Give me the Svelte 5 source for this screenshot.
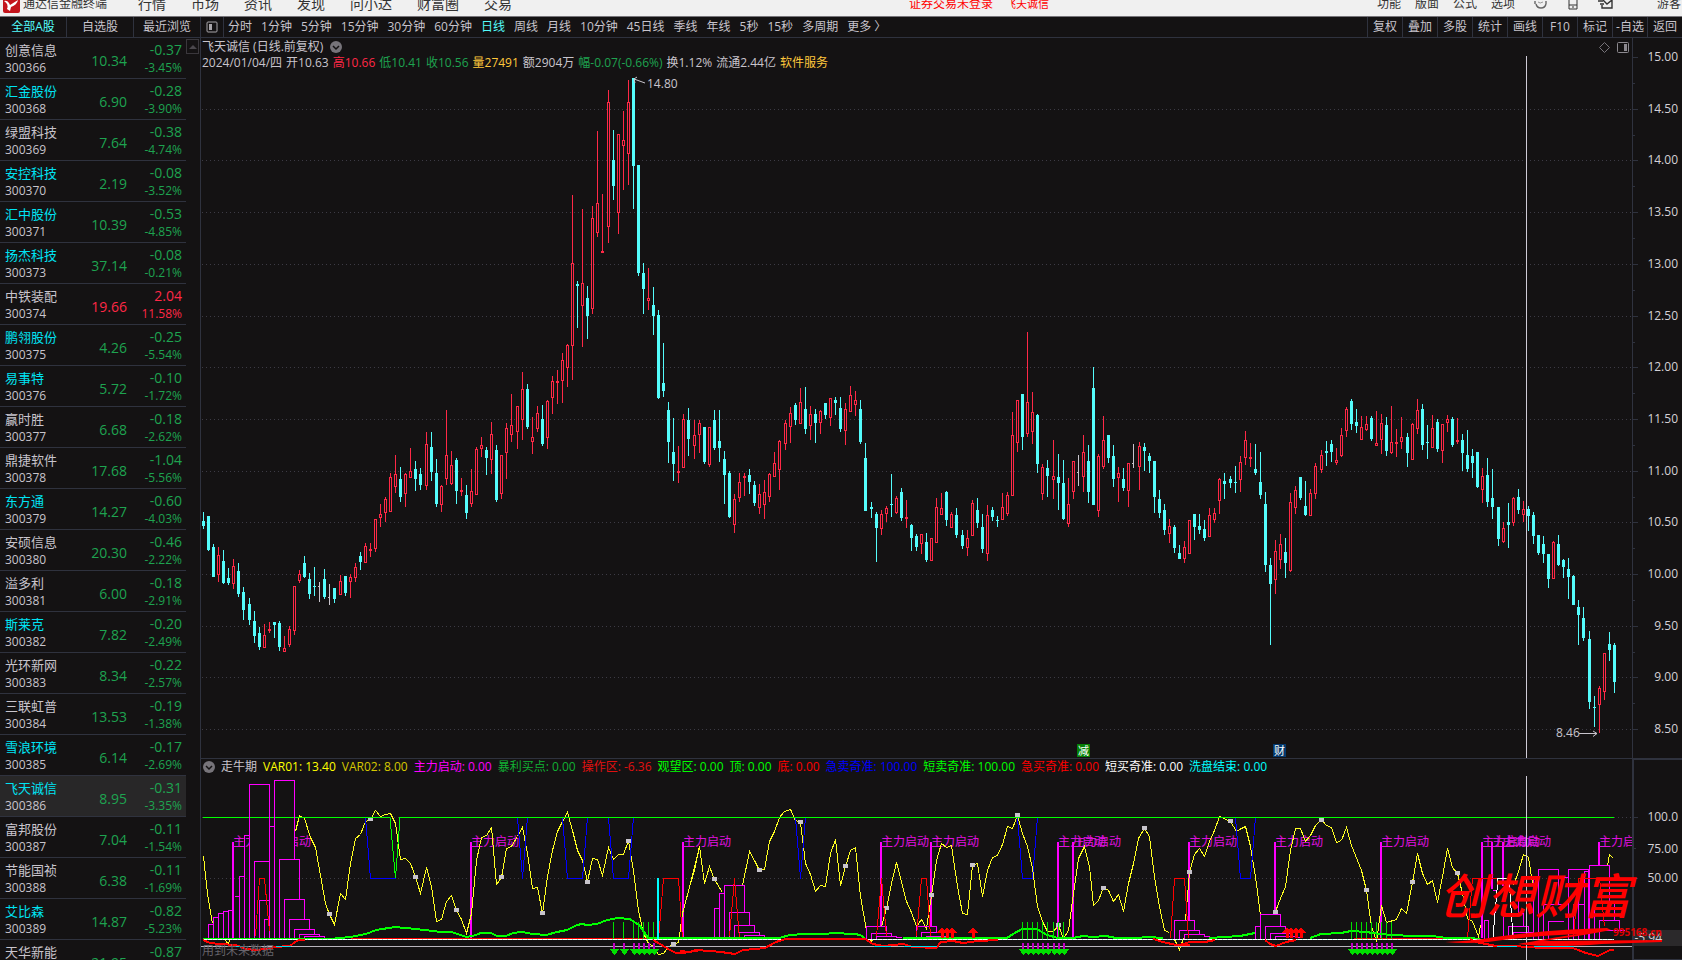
<script lang="ts">
  type Tone = 'up' | 'down' | 'flat';

  interface Stock {
    code: string;
    name: string;
    price: string;
    change: string;
    percent: string;
    marked?: boolean;
    rise?: boolean;
  }

  const SELECTED = '300386';

  const stocks: Stock[] = [
    { code: '300366', name: '创意信息', price: '10.34', change: '-0.37', percent: '-3.45%' },
    { code: '300368', name: '汇金股份', price: '6.90', change: '-0.28', percent: '-3.90%', marked: true },
    { code: '300369', name: '绿盟科技', price: '7.64', change: '-0.38', percent: '-4.74%' },
    { code: '300370', name: '安控科技', price: '2.19', change: '-0.08', percent: '-3.52%', marked: true },
    { code: '300371', name: '汇中股份', price: '10.39', change: '-0.53', percent: '-4.85%', marked: true },
    { code: '300373', name: '扬杰科技', price: '37.14', change: '-0.08', percent: '-0.21%', marked: true },
    { code: '300374', name: '中铁装配', price: '19.66', change: '2.04', percent: '11.58%', rise: true },
    { code: '300375', name: '鹏翎股份', price: '4.26', change: '-0.25', percent: '-5.54%', marked: true },
    { code: '300376', name: '易事特', price: '5.72', change: '-0.10', percent: '-1.72%', marked: true },
    { code: '300377', name: '赢时胜', price: '6.68', change: '-0.18', percent: '-2.62%' },
    { code: '300378', name: '鼎捷软件', price: '17.68', change: '-1.04', percent: '-5.56%' },
    { code: '300379', name: '东方通', price: '14.27', change: '-0.60', percent: '-4.03%', marked: true },
    { code: '300380', name: '安硕信息', price: '20.30', change: '-0.46', percent: '-2.22%' },
    { code: '300381', name: '溢多利', price: '6.00', change: '-0.18', percent: '-2.91%' },
    { code: '300382', name: '斯莱克', price: '7.82', change: '-0.20', percent: '-2.49%', marked: true },
    { code: '300383', name: '光环新网', price: '8.34', change: '-0.22', percent: '-2.57%' },
    { code: '300384', name: '三联虹普', price: '13.53', change: '-0.19', percent: '-1.38%' },
    { code: '300385', name: '雪浪环境', price: '6.14', change: '-0.17', percent: '-2.69%', marked: true },
    { code: '300386', name: '飞天诚信', price: '8.95', change: '-0.31', percent: '-3.35%', marked: true },
    { code: '300387', name: '富邦股份', price: '7.04', change: '-0.11', percent: '-1.54%' },
    { code: '300388', name: '节能国祯', price: '6.38', change: '-0.11', percent: '-1.69%' },
    { code: '300389', name: '艾比森', price: '14.87', change: '-0.82', percent: '-5.23%', marked: true },
    { code: '300390', name: '天华新能', price: '21.95', change: '-0.87', percent: '-3.81%' }
  ];

  const menus = ['行情', '市场', '资讯', '发现', '问小达', '财富圈', '交易'];
  const tools = ['功能', '版面', '公式', '选项'];
  const lists = ['全部A股', '自选股', '最近浏览'];
  const periods = [
    '分时', '1分钟', '5分钟', '15分钟', '30分钟', '60分钟', '日线', '周线', '月线',
    '10分钟', '45日线', '季线', '年线', '5秒', '15秒', '多周期', '更多 〉'
  ];
  const actions = ['复权', '叠加', '多股', '统计', '画线', 'F10', '标记', '-自选', '返回'];

  let activeList = $state('全部A股');
  let activePeriod = $state('日线');

  const quote = [
    ['2024/01/04/四', 'grey'],
    ['开10.63', 'grey'],
    ['高10.66', 'rise'],
    ['低10.41', 'fall'],
    ['收10.56', 'fall'],
    ['量27491', 'gold'],
    ['额2904万', 'grey'],
    ['幅-0.07(-0.66%)', 'fall'],
    ['换1.12%', 'grey'],
    ['流通2.44亿', 'grey'],
    ['软件服务', 'gold']
  ];

  const readings = [
    ['走牛期', '#c8c4cc'],
    ['VAR01: 13.40', '#ffff00'],
    ['VAR02: 8.00', '#d6c800'],
    ['主力启动: 0.00', '#ff00ff'],
    ['暴利买点: 0.00', '#12b034'],
    ['操作区: -6.36', '#e01010'],
    ['观望区: 0.00', '#00ff00'],
    ['顶: 0.00', '#00ff00'],
    ['底: 0.00', '#ff0000'],
    ['急卖奇准: 100.00', '#0000ff'],
    ['短卖奇准: 100.00', '#00ff00'],
    ['急买奇准: 0.00', '#ff0000'],
    ['短买奇准: 0.00', '#ffffff'],
    ['洗盘结束: 0.00', '#00ffff']
  ];

  // Candles: colour letter, then high, body top, body bottom, low in thirds of a pixel below `base`.
  const segments = [
    {
      base: 380,
      rows: `c396 423 438 447,c408 408 510 513,c492 501 591 591,r501 525 585 606,c510 543 609 612,c564 594 609 615,
r537 558 612 627,c549 573 642 651,c621 636 690 720,c654 672 720 735,c693 723 768 789,c741 759 801 810,
r732 765 804 804,r726 747 753 759,c726 726 735 774,c723 729 801 813,r768 804 816 816,r738 747 795 801,
r618 618 753 765,r570 582 603 609,c528 549 591 594,c579 597 642 657,c561 618 621 648,w606 618 621 666,
c567 597 651 657,w612 651 654 675,c624 624 657 669,r585 603 645 645,c588 588 639 648,r582 591 606 654,
r549 561 594 606,c516 528 546 570,r489 498 549 549,r489 507 513 531,r417 417 507 516,r372 402 414 441,
r351 357 399 426,r279 291 396 396,r225 282 321 339,c261 297 351 366,r279 282 342 381,r204 273 294 294,
c243 267 297 333,c264 282 315 330,r156 192 318 330,c156 201 276 303,c237 279 372 381,r315 318 375 396,
r90 225 297 315,r213 255 312 315,c234 240 333 372,r294 330 336 348,c315 345 399 417,r267 333 372 381,
r201 207 345 345,r171 195 207 231,c201 210 234 285,r126 162 240 282,c195 210 360 366,r225 225 342 357,
r129 144 219 297,r42 135 165 186,r78 78 156 207,r-24 27 120 180,c12 27 141 147,r111 171 186 222,
r78 99 147 156,c75 117 192 198,r60 63 174 207,r-12 3 54 102,r-30 3 9 72`
    },
    {
      base: 70,
      rows: `r849 870 933 999,r822 825 894 951,r375 579 828 930,c633 642 648 774,r417 639 708 831,c648 684 738 807,
r408 444 717 732,r183 399 489 501,r372 543 549 549,r60 96 471 519,c180 270 348 390,r192 192 429 492,
r123 210 228 360,r30 96 252 345,c24 24 288 417,c285 285 609 618,c579 609 657 732,r594 684 693 720,
c651 705 738 795,c720 735 984 987,c819 939 963 981,c996 1020 1116 1179,c1044 1146 1182 1233,r1128 1203 1209 1239,
r1032 1047 1194 1194,c1014 1050 1107 1158,r1050 1095 1128 1167,r1050 1059 1095 1149,c1071 1071 1176 1182,
r1071 1071 1185 1191,c1020 1050 1134 1140,c1020 1113 1134 1176,c1143 1167 1215 1302,c1203 1209 1341 1344,
r1272 1287 1365 1389,r1209 1236 1284 1296,r1209 1218 1224 1278,c1197 1215 1236 1272,c1233 1245 1299 1308,
r1242 1272 1314 1332,r1230 1266 1305 1347,r1209 1212 1281 1296,r1146 1179 1221 1221,r1110 1113 1200 1260,
r1050 1059 1122 1140,r1011 1029 1071 1119,c999 1005 1050 1065,r954 996 1062 1062,c951 1017 1077 1092,
r1008 1032 1068 1110,c1017 1032 1059 1119,r1020 1023 1059 1092,c999 999 1035 1047,r984 984 1044 1068,
c981 990 999 1035,c981 1014 1077 1086,r999 1017 1083 1125,r948 975 1026 1026,r963 990 1005 1038,
c990 1017 1116 1122,c1119 1164 1323 1323,c1296 1311 1317 1344,c1326 1332 1374 1476,r1320 1332 1377 1395,
r1308 1314 1332 1356,c1212 1302 1305 1341,r1278 1284 1329 1332,c1254 1266 1344 1353,r1290 1341 1347 1374,
c1362 1365 1404 1443,c1392 1398 1431 1443,r1392 1392 1422 1452,c1389 1416 1470 1476,r1404 1404 1473 1473,
r1284 1311 1419 1419,r1269 1314 1335 1335,c1263 1266 1350 1368,r1326 1332 1374 1374,c1314 1335 1395 1404,
c1380 1395 1428 1437,r1380 1404 1434 1458,r1290 1299 1398 1398,c1284 1320 1359 1374`
    },
    {
      base: 320,
      rows: `c582 621 687 699,r555 585 702 723,c561 570 591 603,c588 600 603 621,r519 561 600 600,r516 525 582 588,
r276 345 528 528,r240 240 369 396,c222 222 351 390,r36 246 342 351,r216 276 336 372,c282 285 432 459,
r432 441 522 540,c420 444 468 531,r360 468 480 537,c402 471 489 570,c420 489 597 600,r474 552 612 621,
r423 423 516 537,w405 456 459 498,r345 396 471 516,c375 423 516 549,c141 204 555 555,r402 408 573 591,
r288 360 441 447,c345 345 414 429,c375 408 477 501,r441 459 474 546,c444 477 504 513,r429 429 513 561,
w372 429 432 444,r366 378 441 510,c369 381 393 453,c399 408 423 459,c423 423 531 579,c510 537 579 594,
c552 570 630 645,r597 618 642 669,c615 621 684 699,c675 699 717 717,r663 681 717 729,r600 600 702 702,
c582 582 621 660,c582 618 630 642,c600 627 654 663,r564 585 651 651,r564 579 600 609,r474 477 543 582,
c459 483 492 537,c468 477 489 504,c438 486 489 519,r408 426 480 516,r333 360 414 435,r369 411 417 441,
c372 447 459 465,c396 486 525 537,c516 552 735 756,c714 735 792 975,r660 693 780 822,r642 672 720 747,
c654 696 729 774,r519 546 753 756,r498 510 564 582,c471 471 534 540,c483 558 585 588,r507 519 588 588,
r429 438 522 537,r390 405 450 459,c363 393 399 438,c360 372 396 426,r384 420 429 435,r324 345 408 411,
r261 267 333 351,c237 243 312 330,c267 306 318 339`
    },
    {
      base: 380,
      rows: `r108 141 180 180,r108 132 150 153,c108 114 177 183,r93 189 198 198,r102 129 180 222,c111 135 213 228,
r78 186 219 222,r147 186 192 231,r111 171 186 207,c159 171 219 261,r129 132 240 240,r57 90 147 162,
c72 87 195 210,c135 186 189 237,r105 144 204 204,c117 126 207 216,r132 132 213 249,r105 117 129 156,
c111 117 195 201,r114 180 186 192,c162 180 219 273,c150 225 267 276,c207 228 249 294,c216 216 321 324,
r264 288 330 369,c234 285 366 381,c267 354 381 417,c381 381 477 498,r426 444 486 489,c369 426 435 504,
r351 354 429 438,c327 351 390 402,r363 387 405 426,c378 387 408 453,c396 405 468 492,c465 465 519 525,
c468 492 522 549,c522 522 597 624,r483 486 597 597,c465 492 555 558,c537 540 561 594,c534 567 591 657,
c585 588 675 675,c660 681 705 795,c681 714 774 783,c753 777 966 987,c948 981 984 1041,r918 924 975 1059,
r819 819 936 960,c756 792 810 843,c789 795 906 939`
    }
  ];

  const tones: Record<string, Tone> = { r: 'up', c: 'down', w: 'flat' };

  const candles = segments
    .flatMap(({ base, rows }) =>
      rows.split(',').map((row) => {
        const text = row.trim();
        const [high, top, bottom, low] = text
          .slice(1)
          .split(' ')
          .map((v) => base + Math.round(Number(v) / 3));
        return { tone: tones[text[0]], high, top, bottom, low };
      })
    )
    .map((candle, i) => ({ ...candle, x: Math.floor(203.52 + i * 5.0567) }));

  const prices = Array.from({ length: 14 }, (_, i) => {
    const price = 15 - i / 2;
    return { label: price.toFixed(2), y: Math.round(57 + i * 51.7) };
  });

  // Turns "x y x y/x y ..." (thirds of a pixel from an origin) into a snapped SVG path.
  function trace(ox: number, oy: number, text: string, shift = 0.5) {
    return text
      .split('/')
      .map((part) => {
        const n = part.trim().split(/\s+/).map(Number);
        let d = '';
        for (let i = 0; i < n.length; i += 2) {
          const x = ox + Math.floor(n[i] / 3) + shift;
          const y = oy + Math.floor(n[i + 1] / 3) + shift;
          d += `${i ? 'L' : 'M'}${x} ${y}`;
        }
        return d;
      })
      .join('');
  }

  const A = [200, 750] as const;
  const B = [690, 740] as const;
  const C = [1180, 740] as const;

  const yellow = [
    trace(...A, `10 318 22 430 37 520/76 570 84 582 88 570/285 245 298 197 313 205 330 262 345 292 360 375 375 460
388 492 403 523 421 430 436 447 451 340 466 265 481 254 496 215 511 207 526 181 541 200 556 194 571 190 586 220 601 328
616 325 631 340 646 380 661 430 679 352 694 410 709 515 724 507 739 453 754 437 769 480 784 508 799 550 814 490 829 330
844 262 859 257 874 233 889 402 904 381 919 295 934 290 952 258 967 233 982 310 997 415 1012 413 1027 489 1042 380
1057 300 1072 245 1087 215 1102 187 1117 240 1132 300 1147 330 1162 395 1177 325 1192 328 1207 377 1225 292 1240 328
1255 314 1270 312 1285 272 1300 360 1315 480 1330 550 1345 580 1360 590 1375 614 1390 611 1405 590 1420 582 1435 578
1448 490 1470 400 1498 290`),
    trace(...B, `0 430 14 390 28 318 43 430 58 378 73 417 97 458/158 435 178 335 193 360 208 390 223 388 238 305
253 275 268 232 283 213 300 207 316 240 331 246 346 370 361 402 376 455 391 437 406 440 421 340 436 298 451 436 466 378
481 332 496 323 511 470 528 570/540 598 543 605 548 598/573 560 588 505 603 430 619 368 649 485 664 518 679 560 694 537
709 565 724 465 739 360 754 310 769 323 784 315 801 440 816 520 831 523 846 375 861 370 877 468 892 390 907 352 922 345
937 312 952 258 967 265 982 225 997 280 1012 320 1027 385 1042 500 1057 543 1072 575 1090 575 1105 555 1120 596
1135 570 1150 460 1165 355 1182 318 1197 380 1210 495 1225 480 1240 443 1255 452 1270 485 1285 463 1300 513 1315 430
1330 370 1345 295 1363 264 1378 290 1393 410 1408 500 1423 570 1438 577/1453 598 1468 628 1480 596`),
    trace(...C, `15 540 28 396 43 342 58 325 73 349 88 305 103 270 118 230 150 243 168 275 183 265 196 260 211 320
226 410 242 525/286 515 301 475 316 440 331 330 346 265 361 265 376 305 391 285 406 255 424 238 439 255 454 262 469 306
484 300 499 263 514 315 544 390 559 450 574 560 589 605 605 495 620 548 648 538 664 505 680 520 697 427 712 340 727 400
742 432 757 420 772 487 787 410 802 325 817 382 832 399 847 460 862 535 877 543 894 590 902 555/1000 435 1015 395
1031 342 1046 352 1058 430/1282 375 1289 343 1301 355`)
  ].join('');

  const blue = [
    trace(...A, `496 203 511 385 586 385/952 203 967 385 982 203/1087 203 1102 385 1147 385 1162 203/1225 203 1240 385 1285 385 1300 203`),
    trace(...B, '316 233 331 415 346 233/982 233 997 415 1027 415 1042 233'),
    trace(...C, '166 233 181 415 211 415 226 233')
  ].join('');

  const redBoxes = [
    trace(...A, '165 560 178 385 193 385 208 545/1375 568 1390 385 1435 385 1448 568'),
    trace(...B, '118 590 133 415 148 596/560 590 574 415 589 590/679 590 694 415 709 415 722 590/1440 596 1453 415 1470 415'),
    trace(...C, '0 415 13 415 26 596/862 596 877 415 955 415/1180 590 1195 415 1258 415 1273 560')
  ].join('');

  const boxes = [
    trace(...A, `25 568 25 523 40 523 40 568/40 523 40 502 55 502 55 568/55 502 55 490 70 490 70 568/70 490 70 485
85 485 85 568/85 485 85 481 100 481/103 439 118 439 118 568/118 439 118 379 133 379 133 568/133 379 133 256 148 256/
148 568 148 103 208 103 208 568/163 568 163 334 208 334/178 568 178 451 208 451/193 568 193 508 208 508/208 229 223 229/
223 568 223 91 284 91 284 328/238 568 238 328 298 328 298 447/253 568 253 447 313 447 313 508/268 568 268 508 328 508
328 538/283 568 283 538 343 538 343 553/298 568 298 553 358 553 358 559/313 568 313 559 373 559 373 565 388 565`),
    trace(...B, `73 596 73 505 88 505 88 596/88 505 88 460 103 460/103 596 103 436 163 436 163 517/118 596 118 517
178 517 178 556/133 596 133 556 193 556 193 577/148 596 148 577 208 577 208 586/163 596 163 586 223 586 223 592/178 596
178 592 238 592/528 596 528 559 589 559 589 580/543 596 543 580 604 580 604 589/558 596 558 589 619 589 619 593 634 593/
679 596 679 559 739 559 739 577/694 596 694 577 754 577 754 589/709 596 709 589 769 589 769 593 784 593/1453 596
1453 541 1513 541 1513 571/1468 596 1468 571 1528 571 1528 583/1483 596 1483 583 1543 583 1543 590 1558 590 1558 596`),
    trace(...C, `226 596 226 559 241 559/241 596 241 523 301 523 301 559/256 596 256 559 316 559 316 580/271 596
271 580 331 580 331 589/286 596 286 589 346 589 346 593 361 593/912 596 912 541 926 541 926 596/936 451 950 451/
969 596 969 520 1030 520 1030 559/985 596 985 559 1045 559 1045 577/1000 596 1000 577 1058 577/1015 520 1015 440/
1045 475 1060 475/1060 596 1060 418 1075 418/1075 596 1075 388 1136 388 1136 493/1090 596 1090 493 1150 493/
1105 596 1105 544 1150 544/1150 412 1165 412/1165 596 1165 388 1226 388 1226 596/1180 596 1180 493 1210 493/
1195 596 1195 415/1213 596 1213 394 1226 394/1228 596 1228 376 1289 376 1289 487/1243 596 1243 487 1304 487 1304 541/
1258 596 1258 541 1318 541 1318 571/1273 571 1333 571`)
  ].join('');

  const greenCurve = [
    trace(...A, `10 567 391 567 451 562 500 552 530 541 586 532 650 539 700 543 724 547 754 547 784 555 800 561 820 559
844 551 874 551 892 558 920 558 940 551 967 547 1000 552 1040 556 1072 547 1102 541 1132 525 1147 522 1162 527 1192 522
1222 512 1255 506 1290 508 1320 528 1345 565 1500 566`, 0),
    trace(...B, `0 596 235 596 268 595 300 586 346 583 406 583 430 580 496 584 511 586 526 596/640 596 952 595 970 583
997 568 1042 568 1057 578 1072 585 1105 595 1150 595 1180 588 1210 592 1250 590 1280 595 1340 595 1375 592 1420 596`, 0),
    trace(...C, '88 596 180 590 226 580/391 596 424 583 484 580 514 575 560 578 600 582 640 587 700 588 760 590 800 594 870 596 900 597', 0)
  ].join('');

  const redCurve = [
    trace(...A, `10 570 30 580 60 584 110 585 140 597 170 601 195 597 225 591 270 589 285 578 298 571 315 570/
1360 570 1380 584 1395 591 1410 600 1430 609 1448 611 1490 605 1500 602`, 0),
    trace(...B, `-30 634 0 636 20 632 60 634 95 636 135 643 160 632 200 628 225 624 260 607 290 599 525 599 550 614
580 618 640 614 670 622 740 624 755 607 790 605 820 609 865 603 925 600/1390 598 1420 608 1460 616 1500 616`, 0),
    trace(...C, `0 616 30 608 75 606 105 601/255 600 270 612 290 618 320 606 350 600/870 598 890 606 950 619 1000 619
1090 624 1180 624 1220 640 1255 650 1290 632 1304 632`, 0)
  ].join('');

  const redBase = trace(...A, '451 566 1345 566') + trace(...C, '520 596 860 596');
  const cyanBits =
    trace(...A, '100 589 140 589/225 589 270 589') +
    trace(...B, '550 619 600 619/640 619 740 619') +
    trace(...C, '950 619 1010 619/1060 619 1180 619');

  const dots = [
    [370, 818], [329, 913], [415, 876], [456, 909], [501, 876], [542, 912], [587, 881], [628, 840], [673, 943],
    [714, 878], [759, 869], [800, 821], [845, 865], [886, 907], [931, 894], [972, 864], [1017, 814], [1058, 924],
    [1103, 887], [1144, 827], [1189, 871], [1230, 820], [1275, 911], [1321, 819], [1366, 889], [1412, 881], [1457, 872]
  ];

  // Start signals: bar position, its bottom end.
  const signals = [
    [232, 939], [262, 930], [470, 939], [682, 939], [880, 926], [930, 926], [1057, 938], [1072, 938], [1188, 920],
    [1274, 913], [1380, 938], [1481, 938], [1491, 889], [1502, 886], [1598, 865]
  ];

  const sells = [
    613, 623, 633, 638, 643, 648, 653, 1022, 1027, 1032, 1037, 1042, 1047, 1053, 1058, 1063,
    1351, 1356, 1361, 1366, 1371, 1376, 1381, 1386, 1391
  ];
  const buys = [941, 946, 951, 972, 1286, 1290, 1295, 1300];
</script>

<div class="terminal">
  <header class="menubar">
    <svg class="logo" width="17" height="13" viewBox="0 0 17 13">
      <path d="M0 0h17v11q0 2-2 2H2q-2 0-2-2z" fill="#c4141c" />
      <path d="M1 1q3-1 5 2l1 2 8-5q-1 5-7 7l-1 4-3-2q2-5-3-8z" fill="#fff" />
    </svg>
    <span class="brand">通达信金融终端</span>
    <nav class="menus">
      {#each menus as menu}
        <button>{menu}</button>
      {/each}
    </nav>
    <div class="notice">
      <span>证券交易未登录</span>
      <span class="ticker">飞天诚信</span>
    </div>
    <div class="tools">
      {#each tools as tool}
        <button>{tool}</button>
      {/each}
    </div>
    <div class="status" aria-hidden="true">
      <svg width="15" height="10" viewBox="0 0 15 10">
        <path d="M2 1v3M13 1v3M3 4q1 4 5 4t5-4M6 8h3" fill="none" stroke="#666" stroke-width="1.4" />
        <path d="M5 2q2 2 5 0" fill="none" stroke="#999" />
      </svg>
      <svg width="10" height="10" viewBox="0 0 10 10">
        <path d="M1 0v9h8V0M1 5h8M4 7h2" fill="none" stroke="#333" />
      </svg>
      <svg width="16" height="10" viewBox="0 0 16 10">
        <path d="M4 5v3h10V0M0 1h5M2 4h4M5 0l4 4 5-4" fill="none" stroke="#333" stroke-width="1.4" />
      </svg>
    </div>
    <span class="guest">游客</span>
  </header>

  <div class="toolbar">
    <div class="lists">
      {#each lists as list}
        <button class:active={list === activeList} onclick={() => (activeList = list)}>{list}</button>
      {/each}
    </div>
    <button class="toggle" aria-label="侧栏">
      <svg width="12" height="12" viewBox="0 0 12 12">
        <rect x="1" y="1" width="10" height="10" rx="1" fill="none" stroke="#a8a5aa" />
        <rect x="3" y="3" width="3" height="6" fill="#a8a5aa" />
      </svg>
    </button>
    <div class="periods">
      {#each periods as period}
        <button class:active={period === activePeriod} onclick={() => (activePeriod = period)}>{period}</button>
      {/each}
    </div>
    <div class="actions">
      {#each actions as action}
        <button>{action}</button>
      {/each}
    </div>
  </div>

  <main>
    <aside>
      <table>
        <tbody>
          {#each stocks as stock (stock.code)}
            <tr class:selected={stock.code === SELECTED}>
              <td class="id">
                <span class="name" class:marked={stock.marked}>{stock.name}</span>
                <span class="code">{stock.code}</span>
              </td>
              <td class="price" class:rise={stock.rise}>{stock.price}</td>
              <td class="delta" class:rise={stock.rise}>
                <span class="change">{stock.change}</span>
                <span class="percent">{stock.percent}</span>
              </td>
            </tr>
          {/each}
        </tbody>
      </table>
      <button class="scroll-up" aria-label="向上">
        <svg width="8" height="4" viewBox="0 0 8 4"><path d="M0 4l4-4 4 4z" fill="#4a474c" /></svg>
      </button>
    </aside>

    <div class="charts">
      <section class="pane">
        <svg class="plot" viewBox="201 38 1481 720">
          <g class="grid">
            {#each prices.slice(1) as { y }}
              <line x1="202" x2="1632" y1={y + 0.5} y2={y + 0.5} />
            {/each}
          </g>
          <g class="axis">
            <path d="M1632.5 38V758" />
            {#each prices as { y }, i}
              <path d="M1633 {y + 0.5}h5" />
              {#if i < 13}
                <path d="M1633 {y + 26.5}h2" />
              {/if}
            {/each}
          </g>
          {#each prices as { label, y }}
            <text class="scale" x="1678" y={y + 4}>{label}</text>
          {/each}
          <path class="cross" d="M1526.5 56V758" />
          <g class="candles">
            {#each candles as c}
              <g class={c.tone}>
                <rect x={c.x} y={c.high} width="1" height={c.low - c.high} />
                {#if c.tone === 'up' && c.bottom - c.top > 2}
                  <rect class="hollow" x={c.x - 0.5} y={c.top + 0.5} width="2" height={c.bottom - c.top - 1} />
                {:else}
                  <rect x={c.x - 1} y={c.top} width={c.tone === 'flat' ? 2 : 3} height={c.bottom - c.top} />
                {/if}
              </g>
            {/each}
          </g>
          <path class="pointer" d="M634 79l11 4M637 77l-3 2 1 4" />
          <text class="note" x="647" y="88">14.80</text>
          <path class="pointer" d="M1579 733.5h18M1593 731l4 2.5-4 3" />
          <text class="note" x="1556" y="737">8.46</text>
          <rect x="1077" y="744" width="13" height="13" fill="#068006" />
          <text class="badge" x="1078" y="755">减</text>
          <rect x="1273" y="744" width="13" height="13" fill="#04386c" />
          <text class="badge" x="1274" y="755">财</text>
          <path d="M1604.5 42.5l5 5-5 5-5-5z" fill="none" stroke="#77747a" />
          <rect x="1617.5" y="42.5" width="11" height="10" rx="1" fill="none" stroke="#8c898f" />
          <rect x="1624" y="44" width="3" height="7" fill="#8c898f" />
        </svg>
        <div class="legend">
          <div class="title">
            <h1>飞天诚信 (日线.前复权)</h1>
            <svg width="12" height="12" viewBox="0 0 12 12">
              <circle cx="6" cy="6" r="6" fill="#77747a" />
              <path d="M3 5l3 3 3-3" fill="none" stroke="#141213" stroke-width="1.5" />
            </svg>
          </div>
          <div class="quote">
            {#each quote as [text, tone]}
              <span class={tone}>{text}</span>
            {/each}
          </div>
        </div>
      </section>

      <section class="pane indicator">
        <svg class="plot" viewBox="201 759 1481 201">
          <g class="grid">
            <line x1="202" x2="1632" y1="817.5" y2="817.5" />
            <line x1="202" x2="1632" y1="878.5" y2="878.5" />
          </g>
          {#each signals as [x, bottom]}
            <rect {x} y="842" width="2" height={bottom - 842} fill="#ff00ff" />
            <text class="signal" x={x + 1} y="846">主力启动</text>
          {/each}
          <path d="M249 784h21v-4h25v160h-46z" fill="#141213" />
          <g class="lines">
            <path d={yellow} stroke="#ffff22" />
            {#each dots as [x, y]}
              <rect x={x - 2} y={y - 1} width="5" height="4" fill="#c8c4cc" />
            {/each}
            <path d={blue} stroke="#0000ff" />
            <path d="M203 817.5H390L395.5 878L400 817.5H1614" stroke="#00ff00" />
            <path d={boxes} stroke="#ff00ff" />
            <path d={redBoxes} stroke="#ff0000" />
            <path d={redBase} stroke="#ff0000" />
            <path d={greenCurve} stroke="#00ff00" stroke-width="2" />
            <path d="M1493 937L1498 878.5H1509L1513 937" stroke="#ffffff" />
            <path d="M657 878h2v61h-2z" fill="#00ffff" stroke="none" />
            <path d="M203 939.5H1614" stroke="#ffffff" />
            <path d="M207 939.5H1614" stroke="#7ff5d0" stroke-dasharray="1 4" />
            <path d="M201 946.5H1632" stroke="#b8b4bc" />
            <path d={redCurve} stroke="#ff0000" stroke-width="2" />
            <path d={cyanBits} stroke="#00e0f0" />
            {#each sells as x}
              <path d="M{x + 0.5} 922v17" stroke="#00e000" />
              <path d="M{x} 943h2v6h-2z" fill="#c000c0" stroke="none" />
              <path d="M{x - 3} 949h9l-4 6h-1z" fill="#00e000" stroke="none" />
            {/each}
            {#each buys as x}
              <path d="M{x + 1} 927l5 6h-3v5h-3v-5h-4z" fill="#ff0000" stroke="none" />
            {/each}
          </g>
          <text class="future" x="202" y="955">用到未来数据</text>
          <path class="cross" d="M1526.5 776V960" />
          <rect x="1632" y="759" width="50" height="201" fill="#141213" />
          <rect x="1633" y="930" width="49" height="16" fill="#2b292b" />
          <g class="axis">
            <path d="M1633 759v201" stroke-width="2" />
            <path d="M1633 759.5h49M1634 817.5h4M1634 848.5h2M1634 878.5h4M1634 959.5h48" />
          </g>
          <text class="scale" x="1678" y="821">100.0</text>
          <text class="scale" x="1678" y="853">75.00</text>
          <text class="scale" x="1678" y="882">50.00</text>
          <text class="scale" x="1662" y="942">-5.94</text>
          <path
            d="M1445 942q30-1 50-5 60-8 112-9l4 2q-30 6-68 11l119-1v2l-60 2q-50 4-84 0 40-7 60-10-50 2-90 8-22 2-43 0z"
            fill="#ff0000"
          />
          <text class="seal" x="1439" y="914">创想财富</text>
          <text class="site" x="1613" y="936">995168.cn</text>
        </svg>
        <div class="readings">
          <svg width="12" height="12" viewBox="0 0 12 12">
            <circle cx="6" cy="6" r="6" fill="#77747a" />
            <path d="M3 5l3 3 3-3" fill="none" stroke="#141213" stroke-width="1.5" />
          </svg>
          {#each readings as [text, color]}
            <span style="color: {color}">{text}</span>
          {/each}
        </div>
      </section>
    </div>
  </main>
</div>

<style>
  :global(body) {
    margin: 0;
    background: #141213;
  }

  .terminal {
    height: 100vh;
    overflow: hidden;
    display: flex;
    flex-direction: column;
    background: #141213;
    color: #c8c4cc;
    font: 12px/16px 'Open Sans', 'Noto Sans CJK SC', sans-serif;
    white-space: nowrap;
  }

  button {
    padding: 0;
    border: 0;
    background: none;
    color: inherit;
    font: inherit;
    white-space: nowrap;
    cursor: pointer;
  }

  .menubar {
    flex: none;
    display: flex;
    height: 16px;
    border-bottom: 1px solid #77757a;
    background: #f0f0f0;
    color: #333;
    line-height: 8px;
  }

  .menubar button {
    height: 8px;
  }

  .logo {
    margin: 0 3px;
  }

  .brand {
    width: 115px;
  }

  .menus {
    display: flex;
    gap: 25px;
    font-size: 14px;
  }

  .notice {
    display: flex;
    gap: 12px;
    flex: 1;
    justify-content: center;
    padding-left: 69px;
    color: #ff0000;
  }

  .ticker {
    font-size: 11px;
  }

  .tools {
    display: flex;
    gap: 14px;
  }

  .status {
    display: flex;
    gap: 20px;
    margin: 0 43px 0 18px;
  }

  .guest {
    width: 25px;
  }

  .toolbar {
    flex: none;
    display: flex;
    height: 20px;
    border-bottom: 1px solid #2f323e;
  }

  .lists {
    flex: none;
    display: flex;
    width: 200px;
    border-right: 1px solid #2f323e;
  }

  .lists button {
    flex: 1;
  }

  .lists button + button {
    border-left: 1px solid #2f323e;
  }

  .toolbar .active {
    color: #54fcfc;
  }

  .toggle {
    display: flex;
    align-items: center;
    justify-content: center;
    width: 23px;
    border-right: 1px solid #2f323e;
  }

  .periods {
    display: flex;
    flex: 1;
    gap: 9px;
    padding-left: 4px;
    overflow: hidden;
  }

  .actions {
    flex: none;
    display: flex;
  }

  .actions button {
    width: 35px;
    border-left: 1px solid #2f323e;
  }

  main {
    flex: 1;
    display: flex;
    min-height: 0;
  }

  aside {
    flex: none;
    display: flex;
    align-items: flex-start;
    width: 200px;
    overflow: hidden;
    border-right: 1px solid #2f323e;
  }

  table {
    width: 186px;
    border-spacing: 0;
    table-layout: fixed;
  }

  td {
    box-sizing: border-box;
    height: 41px;
    padding: 0;
    border-bottom: 1px solid #2f323e;
    color: #1ea350;
  }

  td span {
    display: block;
  }

  .selected td {
    background: #282728;
  }

  .id {
    width: 70px;
    padding-left: 5px;
    color: #c8c4cc;
  }

  .name {
    font-size: 13px;
    line-height: 20px;
  }

  .marked {
    color: #00e4f4;
  }

  .price {
    width: 57px;
    padding-top: 5px;
    font-size: 14px;
    text-align: right;
  }

  .delta {
    width: 59px;
    padding-right: 4px;
    text-align: right;
  }

  .change {
    font-size: 14px;
    line-height: 20px;
  }

  td.rise {
    color: #ff2846;
  }

  .scroll-up {
    display: flex;
    align-items: center;
    justify-content: center;
    width: 13px;
    height: 15px;
    margin-top: 1px;
    border: 1px solid #3a373c;
  }

  .charts {
    flex: 1;
    min-width: 0;
  }

  .pane {
    display: grid;
  }

  .pane > * {
    grid-area: 1 / 1;
  }

  .indicator {
    border-top: 1px solid #2f323e;
  }

  .plot {
    display: block;
    width: 100%;
    height: auto;
  }

  .grid line {
    stroke: #3d3b45;
    stroke-dasharray: 1 3;
    shape-rendering: crispEdges;
  }

  .axis {
    fill: none;
    stroke: #2f323e;
    shape-rendering: crispEdges;
  }

  .scale {
    fill: #d4d1d6;
    text-anchor: end;
  }

  .cross {
    stroke: #cfcbd6;
    shape-rendering: crispEdges;
  }

  .candles {
    shape-rendering: crispEdges;
  }

  .up {
    fill: #ff2846;
  }

  .down {
    fill: #54fcfc;
  }

  .flat {
    fill: #c8c4cc;
  }

  .hollow {
    fill: #141213;
    stroke: #ff2846;
  }

  .pointer {
    fill: none;
    stroke: #c8c4cc;
  }

  .note {
    fill: #c8c4cc;
  }

  .badge {
    fill: #fff;
    font-size: 11px;
  }

  .lines {
    fill: none;
    shape-rendering: crispEdges;
  }

  .signal {
    fill: #e010e0;
  }

  .future {
    fill: #66636a;
  }

  .seal {
    fill: #ff0000;
    font-size: 48px;
    font-style: italic;
    font-weight: 500;
  }

  .site {
    fill: #e00000;
    font-size: 10px;
    font-weight: 700;
  }

  .legend {
    padding: 1px 0 0 1px;
  }

  .title {
    display: flex;
    align-items: center;
    gap: 7px;
  }

  h1 {
    margin: 0;
    font: inherit;
  }

  .quote {
    display: flex;
    gap: 4px;
  }

  .rise {
    color: #ff2846;
  }

  .fall {
    color: #1ea350;
  }

  .gold {
    color: #ffc83c;
  }

  .readings {
    display: flex;
    align-items: center;
    align-self: start;
    gap: 6px;
    padding-left: 2px;
  }
</style>
